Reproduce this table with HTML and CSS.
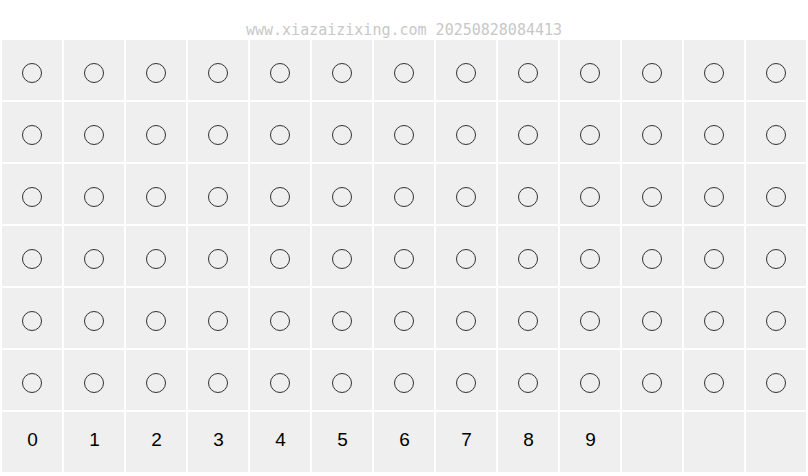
FILE: index.html
```html
<!DOCTYPE html>
<html lang="en">
<head>
    <meta charset="UTF-8">
    <meta name="viewport" content="width=device-width, initial-scale=1.0">
    <title>Glyph preview</title>
    <link rel="stylesheet" href="styles.css">
</head>
<body>
    <div class="stamp">www.xiazaizixing.com 20250828084413</div>
    <div class="grid" id="grid">
        <div class="cell digit">0</div>
        <div class="cell digit">1</div>
        <div class="cell digit">2</div>
        <div class="cell digit">3</div>
        <div class="cell digit">4</div>
        <div class="cell digit">5</div>
        <div class="cell digit">6</div>
        <div class="cell digit">7</div>
        <div class="cell digit">8</div>
        <div class="cell digit">9</div>
        <div class="cell"></div>
        <div class="cell"></div>
        <div class="cell"></div>
    </div>

    <script>
        // 6 rows of missing glyphs shown as rings, before the digit row
        const grid = document.getElementById('grid');
        const firstDigit = grid.firstElementChild;

        for (let i = 0; i < 13 * 6; i++) {
            const cell = document.createElement('div');
            cell.className = 'cell';
            const ring = document.createElement('span');
            ring.className = 'ring';
            cell.appendChild(ring);
            grid.insertBefore(cell, firstDigit);
        }
    </script>
</body>
</html>
```

FILE: styles.css
```css
body {
    margin: 0;
    padding: 0 2px;
    background-color: #fff;
    font-family: 'Liberation Sans', sans-serif;
}

.stamp {
    padding-top: 20px;
    height: 20px;
    line-height: 20px;
    text-align: center;
    font-family: 'DejaVu Sans Mono', monospace;
    font-size: 15px;
    color: #c8c8c8;
}

.grid {
    display: grid;
    grid-template-columns: repeat(13, 60px);
    grid-auto-rows: 60px;
    gap: 2px;
}

.cell {
    background-color: #efefef;
    display: flex;
    justify-content: center;
    align-items: center;
}

.ring {
    width: 18px;
    height: 18px;
    margin-top: 5px;
    border: 1px solid #333;
    border-radius: 50%;
}

.digit {
    font-size: 19px;
    color: #000;
    padding-bottom: 4px;
    padding-left: 1px;
    box-sizing: border-box;
}
```
